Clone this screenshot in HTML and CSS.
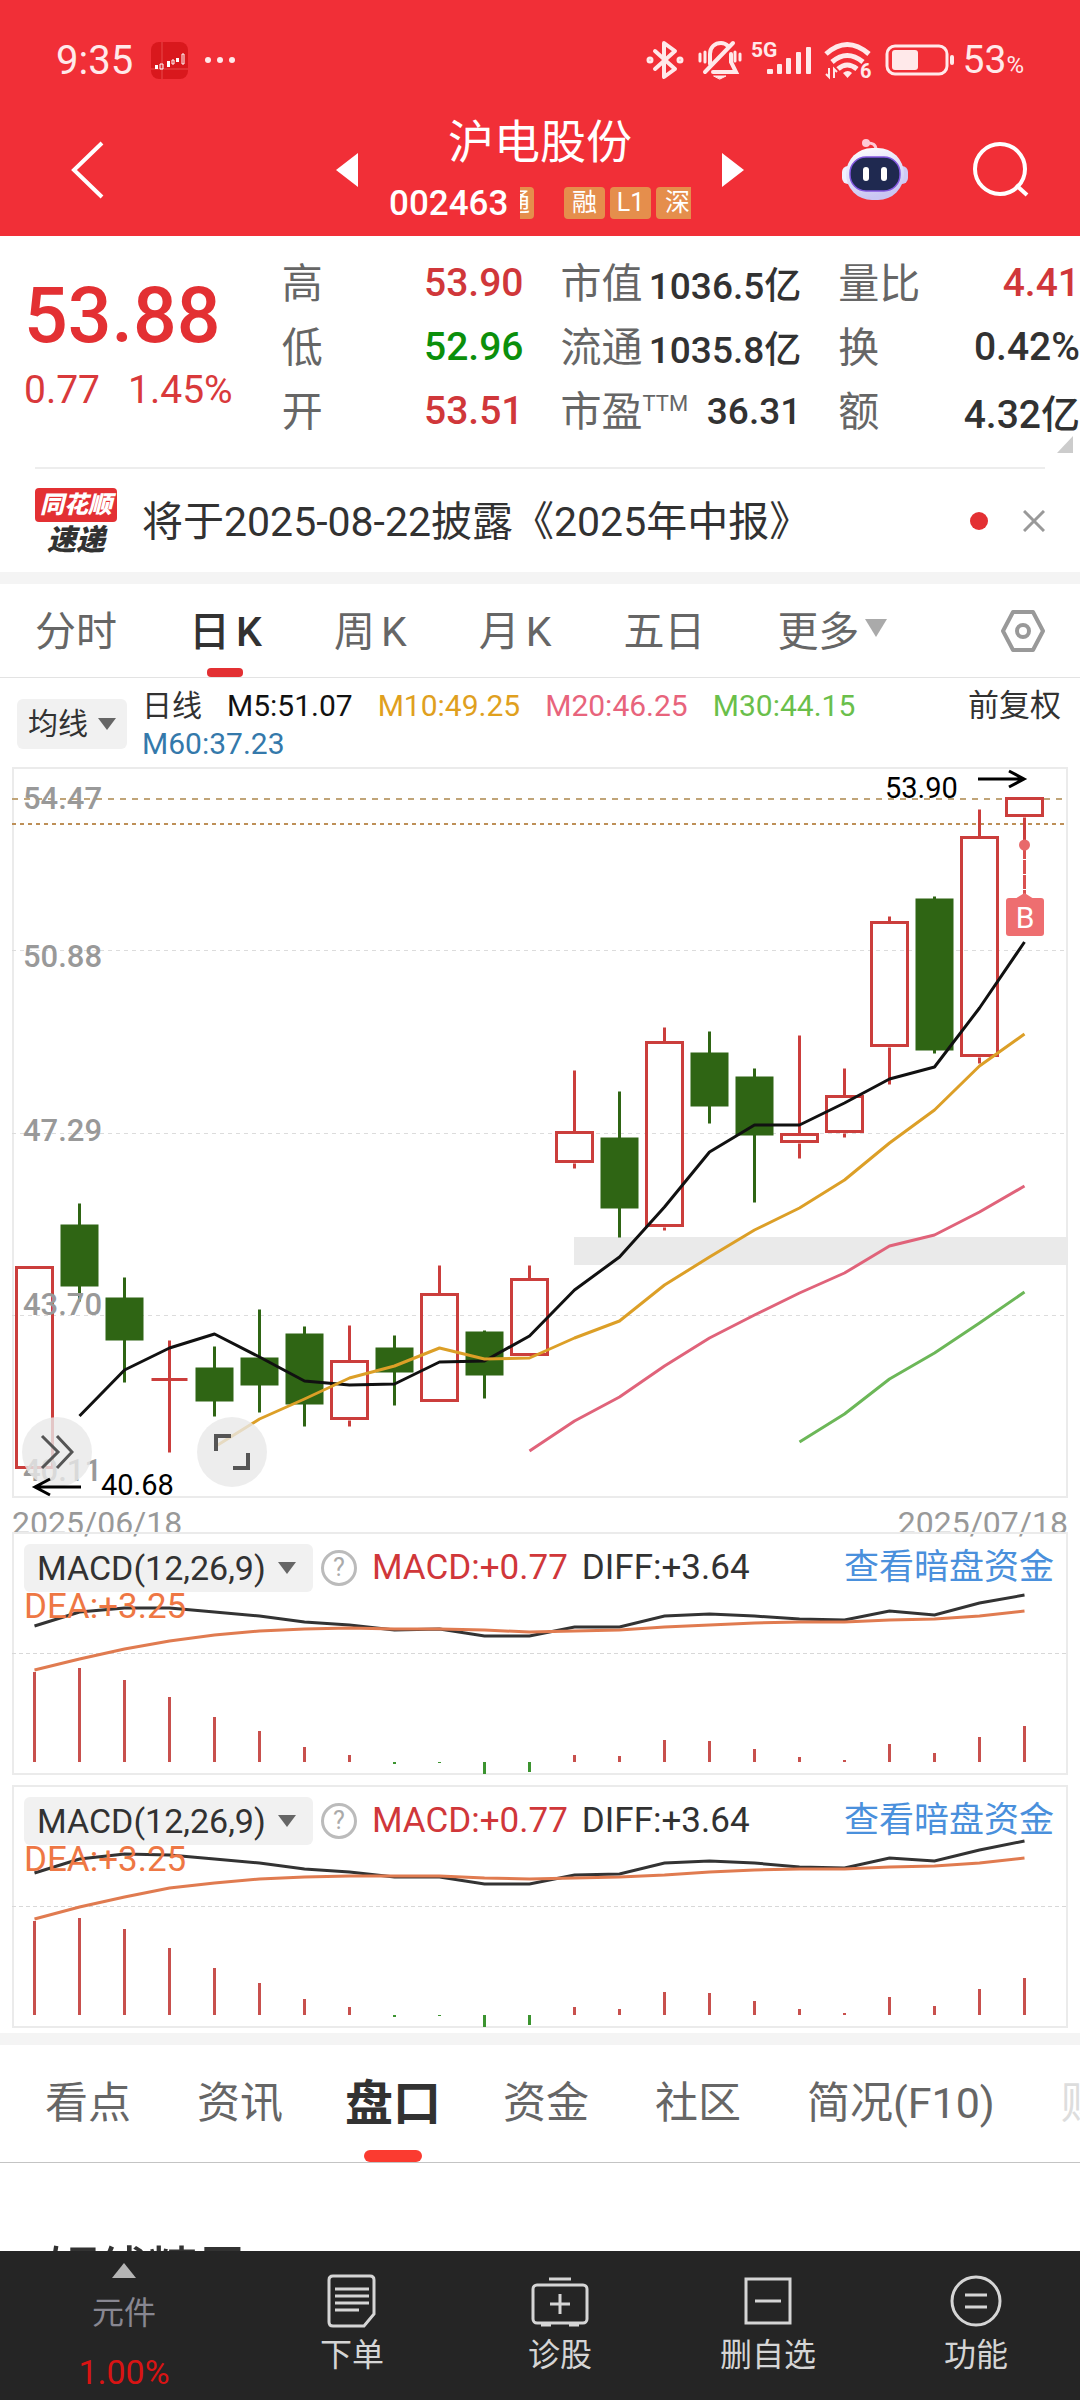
FILE: index.html
```html
<!DOCTYPE html>
<html lang="zh-CN">
<head>
<meta charset="utf-8">
<meta name="viewport" content="width=device-width, initial-scale=1">
<title>沪电股份 002463</title>
<link rel="stylesheet" href="styles.css">
</head>
<body>
<header class="top">
  <div class="status">
    <span class="clock">9:35</span>
    <svg class="app-icon" width="37" height="37" viewBox="0 0 37 37"><rect width="37" height="37" rx="8" fill="#d9181d"/><path d="M11 0v37M0 27h37" stroke="#e8484a" stroke-width="1"/><path d="M4 23h3v4H4zM16 19h3v6h-3zM25 16h3v4h-3z" fill="#fff"/><path d="M9 22h3v5H9zM21 18h2v4h-2zM31 12h2v10h-2z" fill="none" stroke="#fff" stroke-width="1"/></svg>
    <svg width="32" height="8" viewBox="0 0 32 8" fill="#ffe9ea"><circle cx="4" cy="4" r="3"/><circle cx="16" cy="4" r="3"/><circle cx="28" cy="4" r="3"/></svg>
    <div class="status-right">
      <svg width="36" height="40" viewBox="0 0 36 40" fill="none" stroke="#ffe9ea" stroke-width="4" stroke-linejoin="round" stroke-linecap="round"><path d="M8 11l20 18-11 8V3l11 8L8 29"/><circle cx="3" cy="20" r="1.500"/><circle cx="33" cy="20" r="1.500"/></svg>
      <svg class="bell" width="44" height="40" viewBox="0 0 44 40" fill="none" stroke="#ffe9ea" stroke-width="4" stroke-linecap="round"><path d="M7 32L35 3M12 24V14C12 7 17 3 23 3c3 0 5 1 7 3M33 14v8l5 10H15"/><path d="M16 36h12l-6 3z" fill="#ffe9ea" stroke-width="1"/><path d="M2 14v7M7 12v10M37 12v9M42 14v6" stroke-width="3"/></svg>
      <svg class="signal" width="62" height="40" viewBox="0 0 62 40" fill="#ffe9ea"><text x="0" y="17" class="net">5G</text><rect x="16" y="29" width="6" height="5" rx="1"/><rect x="26" y="24" width="5" height="10" rx="1"/><rect x="35" y="18" width="5" height="16" rx="1"/><rect x="45" y="12" width="5" height="22" rx="1"/><rect x="55" y="7" width="5" height="27" rx="1"/></svg>
      <svg class="wifi" width="48" height="40" viewBox="0 0 48 40" fill="none" stroke="#ffe9ea" stroke-width="5"><path d="M2 14q21-19 43 0M8 22q15-13 31 0M14 29q9-8 19 0"/><path d="M19 33q5-4 9 0l-4.500 5z" fill="#ffe9ea" stroke="none"/><path d="M5 28v9l-3-3M10 38v-9l3 3" stroke-width="2"/><text x="36" y="38" class="wifi-gen">6</text></svg>
      <svg class="battery" width="70" height="32" viewBox="0 0 70 32"><rect x="2" y="2" width="60" height="28" rx="8" fill="none" stroke="#ffe9ea" stroke-width="3"/><rect x="7" y="6" width="26" height="20" rx="3" fill="#ffe9ea"/><rect x="65" y="11" width="4" height="10" rx="2" fill="#ffe9ea"/></svg>
      <span class="charge">53<small>%</small></span>
    </div>
  </div>
  <div class="titlebar">
    <div class="side side-left">
      <button type="button" aria-label="返回"><svg width="34" height="58" viewBox="0 0 34 58" fill="none" stroke="#fff" stroke-width="4"><path d="M32 2L4 29l28 27"/></svg></button>
      <button type="button" aria-label="上一只"><svg width="22" height="34" viewBox="0 0 22 34"><path d="M22 0v34L0 17z" fill="#fff"/></svg></button>
    </div>
    <div class="stock">
      <h1>沪电股份</h1>
      <div class="code"><span class="code-num">002463</span><span class="tag cut-left"><span>通</span></span><span class="tag">融</span><span class="tag">L1</span><span class="tag cut-right">深</span></div>
    </div>
    <div class="side side-right">
      <button type="button" class="next" aria-label="下一只"><svg width="22" height="34" viewBox="0 0 22 34"><path d="M0 0v34l22-17z" fill="#fff"/></svg></button>
      <button type="button" aria-label="智能助手"><svg width="66" height="62" viewBox="0 0 66 62"><defs><linearGradient id="shell" x1="0" y1="0" x2="0.3" y2="1"><stop offset="0" stop-color="#fff"/><stop offset="1" stop-color="#c9c6f3"/></linearGradient></defs><path d="M24 4q10-1 10 7" fill="none" stroke="#ffc9d6" stroke-width="3"/><circle cx="24" cy="4" r="4" fill="#ffc9d6"/><rect x="0" y="27" width="12" height="18" rx="6" fill="#f0f0ff"/><rect x="54" y="27" width="12" height="18" rx="6" fill="#cfcaf5"/><rect x="4" y="9" width="58" height="52" rx="26" fill="url(#shell)"/><rect x="8" y="18" width="50" height="34" rx="16" fill="#1f2950" stroke="#8257e0" stroke-width="1.500"/><rect x="21" y="28" width="6" height="14" rx="3" fill="#fff"/><rect x="39" y="28" width="6" height="14" rx="3" fill="#fff"/></svg></button>
      <button type="button" aria-label="搜索"><svg width="56" height="56" viewBox="0 0 56 56" fill="none" stroke="#fff" stroke-width="4"><circle cx="27" cy="27" r="25"/><path d="M43 43l11 10"/></svg></button>
    </div>
  </div>
</header>

<main>
  <section class="quote">
    <div class="price-block">
      <strong class="price">53.88</strong>
      <p class="change"><span>0.77</span><span>1.45%</span></p>
    </div>
    <dl class="stats">
      <div><dt>高</dt><dd class="up">53.90</dd></div>
      <div><dt>低</dt><dd class="down">52.96</dd></div>
      <div><dt>开</dt><dd class="up">53.51</dd></div>
    </dl>
    <dl class="stats">
      <div><dt>市值</dt><dd class="tight">1036.5亿</dd></div>
      <div><dt>流通</dt><dd class="tight">1035.8亿</dd></div>
      <div><dt>市盈<sup>TTM</sup></dt><dd class="tight">36.31</dd></div>
    </dl>
    <dl class="stats">
      <div><dt>量比</dt><dd class="up">4.41</dd></div>
      <div><dt>换</dt><dd>0.42%</dd></div>
      <div><dt>额</dt><dd>4.32亿</dd></div>
    </dl>
    <svg class="corner" width="16" height="17" viewBox="0 0 16 17"><path d="M16 0v17H0z" fill="#ccc"/></svg>
  </section>

  <section class="news">
    <span class="brand"><span class="brand-top">同花顺</span><span class="brand-bottom">速递</span></span>
    <a href="#report">将于2025-08-22披露《2025年中报》</a>
    <span class="dot"></span>
    <button type="button" aria-label="关闭"><svg width="22" height="22" viewBox="0 0 22 22" stroke="#999" stroke-width="3"><path d="M1 1l20 20M21 1L1 21"/></svg></button>
  </section>

  <nav class="periods" aria-label="周期">
    <button type="button">分时</button>
    <button type="button" class="active">日<span class="k">K</span></button>
    <button type="button">周<span class="k">K</span></button>
    <button type="button">月<span class="k">K</span></button>
    <button type="button">五日</button>
    <button type="button" class="more">更多<svg width="22" height="18" viewBox="0 0 22 18"><path d="M0 0h22L11 18z" fill="#aaa"/></svg></button>
    <button type="button" class="gear" aria-label="设置"><svg width="44" height="42" viewBox="0 0 44 42" fill="none" stroke="#999" stroke-width="4" stroke-linejoin="round"><path d="M12 2h20l10 19-10 19H12L2 21z"/><circle cx="22" cy="21" r="6"/></svg></button>
  </nav>

  <section class="legend">
    <button type="button" class="pill ma">均线<svg width="18" height="12" viewBox="0 0 18 12"><path d="M0 0h18L9 12z" fill="#666"/></svg></button>
    <div class="averages"><span>日线</span><span class="m5">M5:51.07</span><span class="m10">M10:49.25</span><span class="m20">M20:46.25</span><span class="m30">M30:44.15</span><span class="m60">M60:37.23</span></div>
    <a class="adjust" href="#adjust">前复权</a>
  </section>

  <section class="chart">
    <svg viewBox="12 767 1056 731" role="img" aria-label="日K线图">
      <rect x="13" y="768" width="1054" height="729" fill="none" stroke="#ebebeb" stroke-width="2"/>
      <g stroke="#dcdcdc" stroke-dasharray="4 4"><path d="M12 950.500h1054M12 1133.500h1054M12 1315.500h1054"/></g>
      <path d="M12 799h1054" stroke="#c0a478" stroke-width="2" stroke-dasharray="6 6"/>
      <path d="M12 824h1054" stroke="#bd8f57" stroke-width="2" stroke-dasharray="4 4"/>
      <rect x="574" y="1237" width="494" height="28" fill="#eaeaea"/>
      <g transform="translate(34.500 .500)" stroke-width="3" fill="none">
        <path stroke="#cb3e3c" d="M135 1340v112M117 1379h36M315 1325v35M315 1420v6M405 1265v28M495 1265v13M540 1070v61M540 1163v5M630 1027v14M630 1227v3M765 1035v98M765 1143v15M810 1068v27M810 1133v4M855 916v5M855 1047v37M945 809v27M945 1057v6M990 817v26"/>
        <path stroke="#cb3e3c" d="M-18 1267h36v200h-36zM297 1361h36v57h-36zM387 1294h36v106h-36zM477 1279h36v75h-36zM522 1132h36v29h-36zM612 1042h36v183h-36zM747 1134h36v7h-36zM792 1096h36v35h-36zM837 922h36v123h-36zM927 837h36v218h-36zM972 798h36v17h-36z"/>
        <path stroke="#2f6514" d="M45 1203v98M90 1277v105M180 1346v70M225 1309v103M270 1326v100M360 1335v70M450 1330v68M585 1091v146M675 1031v92M720 1068v134M900 896v157"/>
        <path fill="#2f6514" d="M26 1224h38v62h-38zM71 1297h38v43h-38zM161 1367h38v34h-38zM206 1357h38v28h-38zM251 1333h38v71h-38zM341 1347h38v25h-38zM431 1331h38v44h-38zM566 1137h38v71h-38zM656 1052h38v54h-38zM701 1076h38v59h-38zM881 898h38v152h-38z"/>
      </g>
      <g class="axis"><text x="23" y="809">54.47</text><text x="23" y="967">50.88</text><text x="23" y="1141">47.29</text><text x="23" y="1315">43.70</text><text x="23" y="1481">40.11</text></g>
      <g transform="translate(34.500 0)" stroke-width="3" fill="none" stroke-linejoin="round">
        <path stroke="#111" d="M45 1416L90 1370 135 1348 180 1334 225 1357 270 1381 315 1385 360 1384 405 1362 450 1361 495 1336 540 1290 585 1257 630 1207 675 1152 720 1125 765 1125 810 1103 855 1079 900 1067 945 1008 990 942"/>
        <path stroke="#dc9f27" d="M180 1447L225 1419 270 1399 315 1378 360 1366 405 1348 450 1359 495 1358 540 1338 585 1321 630 1285 675 1257 720 1230 765 1208 810 1180 855 1143 900 1110 945 1066 990 1034"/>
        <path stroke="#e0637a" d="M495 1451L540 1421 585 1397 630 1366 675 1338 720 1315 765 1293 810 1273 855 1246 900 1235 945 1212 990 1186"/>
        <path stroke="#6cb758" d="M765 1442L810 1414 855 1379 900 1353 945 1323 990 1292"/>
      </g>
      <path d="M1024.500 845v50" stroke="#d9504f" stroke-width="3" stroke-dasharray="14 1"/>
      <circle cx="1024.500" cy="845" r="5.500" fill="#e8696b"/>
      <path d="M1015 899l9.500-6 9.500 6z" fill="#ee6e70"/>
      <rect x="1006" y="898" width="38" height="38" rx="3" fill="#ee6e70"/>
      <text class="buy" x="1025" y="928" text-anchor="middle">B</text>
      <text class="extreme" x="885" y="798">53.90</text>
      <path d="M978 779h46M1009 771l15 8-15 8" fill="none" stroke="#000" stroke-width="3"/>
    </svg>
    <button type="button" class="round expand" aria-label="展开"><svg width="34" height="36" viewBox="0 0 34 36" fill="none" stroke="#555" stroke-width="3"><path d="M2 2l16 16L2 34M17 2l15 16-15 16"/></svg></button>
    <button type="button" class="round full" aria-label="全屏"><svg width="36" height="38" viewBox="0 0 36 38" fill="none" stroke="#555" stroke-width="4"><path d="M2 18V3h15M34 20v15H19"/></svg></button>
    <svg class="low-mark" viewBox="12 767 1056 731" aria-hidden="true"><path d="M81 1487H35M50 1479l-15 8 15 8" fill="none" stroke="#000" stroke-width="3"/><text class="extreme" x="101" y="1495">40.68</text></svg>
  </section>
  <div class="dates"><time>2025/06/18</time><time>2025/07/18</time></div>

  <section class="macd">
    <svg viewBox="12 -1 1056 243" role="img" aria-label="MACD">
      <rect x="13" y="0" width="1054" height="241" fill="none" stroke="#ebebeb" stroke-width="2"/>
      <path d="M12 120.500h1054" stroke="#d8d8d8" stroke-dasharray="4 3"/>
      <g transform="translate(34.500 0)" fill="none" stroke-width="3">
        <path stroke="#c8504d" d="M0 139V229M45 135V229M90 147V229M135 164V229M180 184V229M225 198V229M270 214V229M315 222V229M540 222V229M585 223V229M630 207V229M675 208V229M720 216V229M765 224V229M810 227V229M855 211V229M900 220V229M945 204V229M990 193V229"/>
        <path stroke="#3c9430" d="M360 229v2M405 229v1M450 229v12M495 229v10"/>
        <path stroke="#333" d="M0 93L45 79 90 75 135 75 180 79 225 83 270 89 315 92 360 97 405 96 450 103 495 103 540 94 585 94 630 83 675 81 720 83 765 86 810 87 855 78 900 82 945 70 990 62"/>
        <path stroke="#e07b50" d="M0 137L45 126 90 116 135 108 180 102 225 98 270 96 315 95 360 96 405 96 450 97 495 99 540 98 585 97 630 94 675 92 720 90 765 89 810 89 855 87 900 86 945 83 990 78"/>
      </g>
    </svg>
    <div class="macd-head">
      <button type="button" class="pill">MACD(12,26,9)<svg width="18" height="12" viewBox="0 0 18 12"><path d="M0 0h18L9 12z" fill="#666"/></svg></button>
      <button type="button" class="help" aria-label="说明">?</button>
      <span class="up">MACD:+0.77</span><span>DIFF:+3.64</span>
      <a href="#dark-pool">查看暗盘资金</a>
      <span class="dea">DEA:+3.25</span>
    </div>
  </section>

  <section class="macd">
    <svg viewBox="12 -1 1056 243" role="img" aria-label="MACD">
      <rect x="13" y="0" width="1054" height="241" fill="none" stroke="#ebebeb" stroke-width="2"/>
      <path d="M12 120.500h1054" stroke="#d8d8d8" stroke-dasharray="4 3"/>
      <g transform="translate(34.500 0)" fill="none" stroke-width="3">
        <path stroke="#c8504d" d="M0 135V229M45 132V229M90 143V229M135 162V229M180 182V229M225 197V229M270 213V229M315 221V229M540 221V229M585 223V229M630 206V229M675 207V229M720 215V229M765 223V229M810 227V229M855 211V229M900 220V229M945 203V229M990 192V229"/>
        <path stroke="#3c9430" d="M360 229v2M405 229v1M450 229v12M495 229v10"/>
        <path stroke="#333" d="M0 87L45 73 90 68 135 69 180 73 225 77 270 83 315 86 360 91 405 91 450 98 495 98 540 89 585 88 630 77 675 75 720 77 765 81 810 82 855 72 900 75 945 64 990 55"/>
        <path stroke="#e07b50" d="M0 133L45 121 90 111 135 102 180 97 225 93 270 91 315 90 360 90 405 90 450 92 495 93 540 92 585 91 630 89 675 86 720 84 765 83 810 83 855 81 900 80 945 77 990 72"/>
      </g>
    </svg>
    <div class="macd-head">
      <button type="button" class="pill">MACD(12,26,9)<svg width="18" height="12" viewBox="0 0 18 12"><path d="M0 0h18L9 12z" fill="#666"/></svg></button>
      <button type="button" class="help" aria-label="说明">?</button>
      <span class="up">MACD:+0.77</span><span>DIFF:+3.64</span>
      <a href="#dark-pool">查看暗盘资金</a>
      <span class="dea">DEA:+3.25</span>
    </div>
  </section>

  <nav class="sections" aria-label="栏目">
    <a href="#view">看点</a>
    <a href="#news">资讯</a>
    <a href="#book" class="active">盘口</a>
    <a href="#funds">资金</a>
    <a href="#community">社区</a>
    <a href="#profile">简况(F10)</a>
    <a href="#finance" class="faded">财务</a>
  </nav>
  <section class="detail"><h2>短线精灵</h2></section>
</main>

<footer class="dock">
  <button type="button" class="sector"><svg width="24" height="15" viewBox="0 0 24 15"><path d="M12 0l12 15H0z" fill="#b5b5b5"/></svg><span class="sector-name">元件</span><span class="sector-rate">1.00%</span></button>
  <button type="button"><svg width="50" height="54" viewBox="0 0 50 54" fill="none" stroke="#d5d5d5" stroke-width="3"><path d="M6 2h37q4 0 4 4v34L37 52H6q-4 0-4-4V6q0-4 4-4z"/><path d="M8 15h34M8 22h34M8 29h34M8 36h24"/></svg>下单</button>
  <button type="button"><svg width="58" height="54" viewBox="0 0 58 54" fill="none" stroke="#d5d5d5" stroke-width="3"><path d="M18 5h22"/><rect x="2" y="11" width="54" height="38" rx="4"/><path d="M29 20v20M19 30h20M10 51h10M38 51h10"/></svg>诊股</button>
  <button type="button"><svg width="48" height="54" viewBox="0 0 48 54" fill="none" stroke="#d5d5d5" stroke-width="3"><rect x="2" y="5" width="44" height="44"/><path d="M11 27h26"/></svg>删自选</button>
  <button type="button"><svg width="52" height="54" viewBox="0 0 52 54" fill="none" stroke="#d5d5d5" stroke-width="3"><circle cx="26" cy="27" r="24"/><path d="M15 21h22M15 33h22"/></svg>功能</button>
</footer>
</body>
</html>
```
FILE: styles.css
```css
* { box-sizing: border-box; }
body { margin: 0; min-height: 100vh; background: #fff; color: #323232; font-family: Roboto, "Noto Sans CJK SC", sans-serif; }
button { margin: 0; padding: 0; border: 0; background: none; color: inherit; font: inherit; }
a { color: inherit; text-decoration: none; }
h1, h2, p, dl, dd { margin: 0; }
svg { display: block; flex: none; }

/* red header */
.top { background: #f12f37; color: #fff; }
.status { display: flex; align-items: center; height: 108px; padding: 12px 56px 0; color: #ffe9ea; }
.status svg { overflow: visible; }
.clock { font-size: 40px; }
.app-icon { margin: 0 16px 0 18px; }
.status-right { display: flex; align-items: center; margin-left: auto; }
.bell { margin-left: 15px; }
.signal { margin-left: 9px; }
.wifi { margin-left: 11px; }
.battery { margin: 0 8px 0 13px; }
.net { font-size: 21px; font-weight: 700; }
.wifi-gen { font-size: 20px; font-weight: 700; stroke: none; fill: #ffe9ea; }
.charge { font-size: 39px; }
.charge small { font-size: 24px; }

.titlebar { display: grid; grid-template-columns: 1fr 302px 1fr; column-gap: 31px; align-items: start; height: 128px; }
.side { display: flex; align-items: center; height: 124px; }
.side-left { justify-content: space-between; padding-left: 70px; }
.side-right { gap: 65px; padding-right: 51px; }
.next { margin-right: auto; }
.stock { text-align: center; }
.stock h1 { padding-top: 4px; font-size: 46px; font-weight: 400; line-height: 60px; }
.code { display: flex; align-items: center; height: 32px; margin-top: 15px; }
.code-num { margin-right: auto; font-size: 35px; font-weight: 500; }
.tag { width: 41px; height: 32px; margin-left: 5px; border-radius: 4px; background: #e58e4c; font-size: 25px; line-height: 31px; overflow: hidden; }
.cut-left { display: flex; justify-content: flex-end; width: 14px; margin: 0 25px 0 0; border-radius: 0 4px 4px 0; }
.cut-left span { margin-right: 4px; }
.cut-right { width: 35px; padding-left: 8px; border-radius: 4px 0 0 4px; }

/* quote block */
.quote { position: relative; display: grid; grid-template-columns: 245fr 242fr 241fr 242fr; column-gap: 37px; padding: 14px 0 25px; }
.price-block { padding: 20px 0 0 24px; white-space: nowrap; color: #e33033; }
.price { display: block; font-size: 77px; font-weight: 500; line-height: 92px; }
.change { display: flex; gap: 28px; font-size: 39px; line-height: 56px; color: #d9393b; }
.stats > div { display: flex; justify-content: space-between; align-items: center; height: 64px; white-space: nowrap; }
.stats dt { padding-bottom: 4px; font-size: 41px; color: #666; }
.stats dd { padding-top: 2px; font-size: 39px; font-weight: 500; }
.stats .tight { font-size: 37px; }
.stats sup { font-size: 22px; }
.up { color: #d0373a; }
.down { color: #0b8f0b; }
.corner { position: absolute; right: 7px; bottom: 14px; }

.news { display: flex; align-items: center; height: 105px; margin: 0 35px; border-top: 2px solid #ededed; font-size: 41px; white-space: nowrap; }
.news a { padding-bottom: 6px; }
.brand { display: flex; flex-direction: column; align-items: center; gap: 4px; width: 82px; margin-right: 25px; font-style: italic; font-weight: 900; }
.brand-top { width: 82px; border-radius: 4px; background: #e33033; color: #fff; font-size: 24px; line-height: 34px; text-align: center; }
.brand-bottom { font-size: 29px; line-height: 28px; }
.dot { width: 18px; height: 18px; margin: 0 35px 0 auto; border-radius: 50%; background: #e33033; }

/* chart periods */
.periods { display: flex; align-items: center; gap: 72px; height: 106px; padding: 0 35px; border-top: 12px solid #f4f4f4; border-bottom: 1px solid #e3e3e3; color: #666; font-size: 41px; white-space: nowrap; }
.periods button { position: relative; height: 100%; padding-bottom: 5px; }
.periods .k { margin-left: 6px; }
.periods .active { color: #323232; font-weight: 500; }
.periods .active::after { content: ""; position: absolute; bottom: 0; left: 50%; width: 36px; height: 9px; margin-left: -18px; border-radius: 4px; background: #e33033; }
.periods .more { display: flex; align-items: center; gap: 6px; }
.periods .gear { margin-left: auto; padding: 0; }

.pill { display: flex; align-items: center; gap: 12px; height: 48px; border-radius: 6px; background: #f1f1f1; white-space: nowrap; }
.legend { display: flex; align-items: flex-start; height: 89px; padding: 9px 19px 0 17px; font-size: 30px; line-height: 38px; }
.ma { flex: none; gap: 10px; height: 50px; margin: 12px 15px 0 0; padding: 0 11px; }
.averages { display: flex; flex-wrap: wrap; column-gap: 25px; flex: 1; }
.adjust { font-size: 31px; }
.m5 { color: #111; }
.m10 { color: #e0a01e; }
.m20 { color: #e8647c; }
.m30 { color: #6abf4b; }
.m60 { color: #3479ab; }

.chart { position: relative; margin: 0 12px; }
.chart > svg { width: 100%; height: auto; }
.chart .low-mark { position: absolute; inset: 0; pointer-events: none; }
.axis { fill: #999; font-size: 31px; font-weight: 500; }
.extreme { font-size: 29px; fill: #000; }
.buy { font-size: 30px; fill: #fff; }
.round { position: absolute; bottom: 11px; display: flex; align-items: center; justify-content: center; width: 70px; height: 70px; border-radius: 50%; background: rgba(232, 232, 232, .8); }
.expand { left: 10px; }
.full { left: 185px; }
.dates { display: flex; justify-content: space-between; height: 34px; margin: 0 12px; color: #999; font-size: 32px; line-height: 50px; }

.macd { display: grid; margin: 0 12px 10px; }
.macd > svg { grid-area: 1 / 1; width: 100%; height: auto; }
.macd-head { grid-area: 1 / 1; display: flex; flex-wrap: wrap; align-items: center; align-content: flex-start; padding: 12px 14px 0 12px; font-size: 35px; line-height: 30px; }
.macd-head .pill { width: 289px; margin-right: 8px; padding-left: 13px; font-size: 34px; }
.help { width: 36px; height: 36px; margin-right: 15px; border: 3px solid #bbb; border-radius: 50%; color: #aaa; font-size: 25px; }
.macd-head .up { margin-right: 14px; }
.macd-head a { margin-left: auto; color: #4a90dc; }
.dea { flex-basis: 100%; color: #ee7744; }

/* section tabs */
.sections { display: flex; align-items: center; gap: 66px; height: 130px; margin-top: -5px; padding-left: 45px; overflow: hidden; border-top: 12px solid #f4f4f4; border-bottom: 1px solid #c4c4c4; color: #666; font-size: 43px; line-height: 117px; white-space: nowrap; }
.sections .active { position: relative; margin: 0 -4px; color: #323232; font-size: 48px; font-weight: 700; }
.sections .active::after { content: ""; position: absolute; bottom: 0; left: 50%; width: 58px; height: 12px; margin-left: -29px; border-radius: 6px; background: #fb3b30; }
.sections .faded { color: #ddd; }
.detail h2 { padding: 72px 48px 0; font-size: 50px; font-weight: 500; line-height: 72px; }

.dock { position: fixed; right: 0; bottom: 0; left: 0; display: grid; grid-template-columns: 248fr repeat(4, 208fr); height: 149px; background: #252525; color: #d5d5d5; font-size: 32px; line-height: 44px; }
.dock button { display: flex; flex-direction: column; align-items: center; gap: 5px; padding-top: 23px; }
.dock .sector { gap: 0; padding-top: 12px; }
.sector-name { margin-top: 13px; color: #888791; }
.sector-rate { margin-top: 15px; color: #d81414; font-size: 34px; }
```
